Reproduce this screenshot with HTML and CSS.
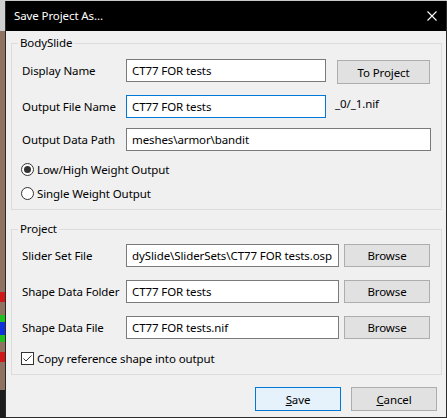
FILE: index.html
```html
<!DOCTYPE html>
<html>
<head>
<meta charset="utf-8">
<link rel="stylesheet" href="styles.css">
</head>
<body>
<div class="desk">
  <div class="strip"></div>
  <div class="window">
    <div class="titlebar">
      <span class="title">Save Project As...</span>
      <svg class="close" width="10" height="10" viewBox="0 0 10 10"><path d="M0.5 0.5 L9.5 9.5 M9.5 0.5 L0.5 9.5" stroke="#fff" stroke-width="1.1" fill="none"/></svg>
    </div>
    <div class="content">
      <fieldset class="group">
        <legend>BodySlide</legend>
        <div class="row mt8">
          <span class="lbl">Display Name</span>
          <input class="field w200" type="text" value="CT77 FOR tests">
          <button class="btn btn-proj">To Project</button>
        </div>
        <div class="row mt11">
          <span class="lbl">Output File Name</span>
          <input class="field w200 focused" type="text" value="CT77 FOR tests">
          <span class="suffix">_0/_1.nif</span>
        </div>
        <div class="row mt10">
          <span class="lbl">Output Data Path</span>
          <input class="field w305" type="text" value="meshes\armor\bandit">
        </div>
        <div class="opt mt10">
          <span class="radio checked"></span>
          <span>Low/High Weight Output</span>
        </div>
        <div class="opt mt8">
          <span class="radio"></span>
          <span>Single Weight Output</span>
        </div>
      </fieldset>
      <fieldset class="group group2">
        <legend>Project</legend>
        <div class="row mt7">
          <span class="lbl">Slider Set File</span>
          <input class="field w213 scrolled" type="text" value="dySlide\SliderSets\CT77 FOR tests.osp">
          <button class="btn btn-browse">Browse</button>
        </div>
        <div class="row mt13">
          <span class="lbl">Shape Data Folder</span>
          <input class="field w213" type="text" value="CT77 FOR tests">
          <button class="btn btn-browse">Browse</button>
        </div>
        <div class="row mt13">
          <span class="lbl">Shape Data File</span>
          <input class="field w213" type="text" value="CT77 FOR tests.nif">
          <button class="btn btn-browse">Browse</button>
        </div>
        <div class="opt mt11">
          <svg class="check" width="13" height="13" viewBox="0 0 13 13"><rect x="0.5" y="0.5" width="12" height="12" fill="#fff" stroke="#333"/><path d="M2.5 6.5 L5 9 L10.5 3.5" stroke="#333" stroke-width="1" fill="none"/></svg>
          <span>Copy reference shape into output</span>
        </div>
      </fieldset>
      <div class="actions">
        <button class="btn btn-act default"><u>S</u>ave</button>
        <button class="btn btn-act"><u>C</u>ancel</button>
      </div>
    </div>
  </div>
</div>
</body>
</html>
```
FILE: styles.css
```css
html, body {
  margin: 0;
  padding: 0;
}
body {
  font-family: "Noto Sans", "Open Sans", sans-serif;
  font-size: 11.5px;
  letter-spacing: -0.1px;
  color: #000;
  background: #c9c9c9;
}
.desk {
  display: flex;
  width: 447px;
  height: 418px;
  overflow: hidden;
}
.strip {
  width: 5px;
  flex: none;
  background: linear-gradient(to bottom,
    #cfcfcf 0 31px,
    #8f7262 31px 292px,
    #d01818 292px 302px,
    #8f7262 302px 315px,
    #20c020 315px 322px,
    #1030e0 322px 335px,
    #20c020 335px 342px,
    #8f7262 342px 352px,
    #d01818 352px 362px,
    #8f7262 362px 390px,
    #1c1c1c 390px 418px);
}
.window {
  width: 442px;
  height: 417px;
  margin-top: 1px;
  box-sizing: border-box;
  border: 1px solid #2a2a2a;
  border-top: 0;
  background: #f0f0f0;
  display: flex;
  flex-direction: column;
}
.titlebar {
  height: 30px;
  flex: none;
  background: #000;
  color: #fff;
  display: flex;
  align-items: center;
  justify-content: space-between;
  padding: 0 9px 0 8px;
}
.title {
  line-height: 16px;
}
.close {
  display: block;
}
.content {
  padding: 4px 4px 0 5px;
  display: flex;
  flex-direction: column;
}
.group {
  margin: 0;
  padding: 0 0 8px 10px;
  border: 1px solid #dcdcdc;
  min-width: 0;
  display: flex;
  flex-direction: column;
}
.group legend {
  padding: 0 2px;
  margin-left: -4px;
  line-height: 16px;
}
.group2 {
  margin-top: 11px;
}
.row {
  display: flex;
  align-items: flex-start;
}
.mt7 { margin-top: 7px; }
.mt8 { margin-top: 8px; }
.mt10 { margin-top: 10px; }
.mt11 { margin-top: 11px; }
.mt13 { margin-top: 13px; }
.lbl {
  width: 104px;
  flex: none;
  line-height: 23px;
  white-space: nowrap;
}
.field {
  height: 23px;
  box-sizing: border-box;
  border: 1px solid #7a7a7a;
  padding: 0 5px;
  margin: 0;
  font-family: inherit;
  font-size: inherit;
  letter-spacing: inherit;
  color: #000;
  background: #fff;
  outline: none;
}
.field.focused {
  border-color: #0078d7;
}
.field.scrolled {
  text-align: right;
  padding-right: 6px;
}
.w200 { width: 200px; }
.w305 { width: 305px; }
.w213 { width: 213px; }
.suffix {
  margin-left: 9px;
  line-height: 18px;
}
.btn {
  box-sizing: border-box;
  background: #e1e1e1;
  border: 1px solid #adadad;
  font-family: inherit;
  font-size: inherit;
  letter-spacing: inherit;
  color: #000;
  padding: 0;
  margin: 0;
}
.btn-proj {
  width: 93px;
  height: 24px;
  margin-top: 1px;
  margin-left: 11px;
}
.btn-browse {
  width: 86px;
  height: 23px;
  margin-left: 5px;
}
.opt {
  display: flex;
  align-items: center;
  height: 16px;
}
.radio {
  width: 13px;
  height: 13px;
  box-sizing: border-box;
  border: 1px solid #333;
  border-radius: 50%;
  background: #fff;
  margin-left: -1px;
  margin-right: 3px;
  display: flex;
  align-items: center;
  justify-content: center;
}
.radio.checked::after {
  content: "";
  width: 7px;
  height: 7px;
  border-radius: 50%;
  background: #333;
}
.check {
  display: block;
  margin-left: -1px;
  margin-right: 3px;
}
.actions {
  display: flex;
  justify-content: flex-end;
  gap: 10px;
  margin-top: 12px;
  padding-right: 5px;
}
.btn-act {
  width: 86px;
  height: 24px;
}
.btn-act.default {
  background: #e5f1fb;
  border-color: #0078d7;
}
```
